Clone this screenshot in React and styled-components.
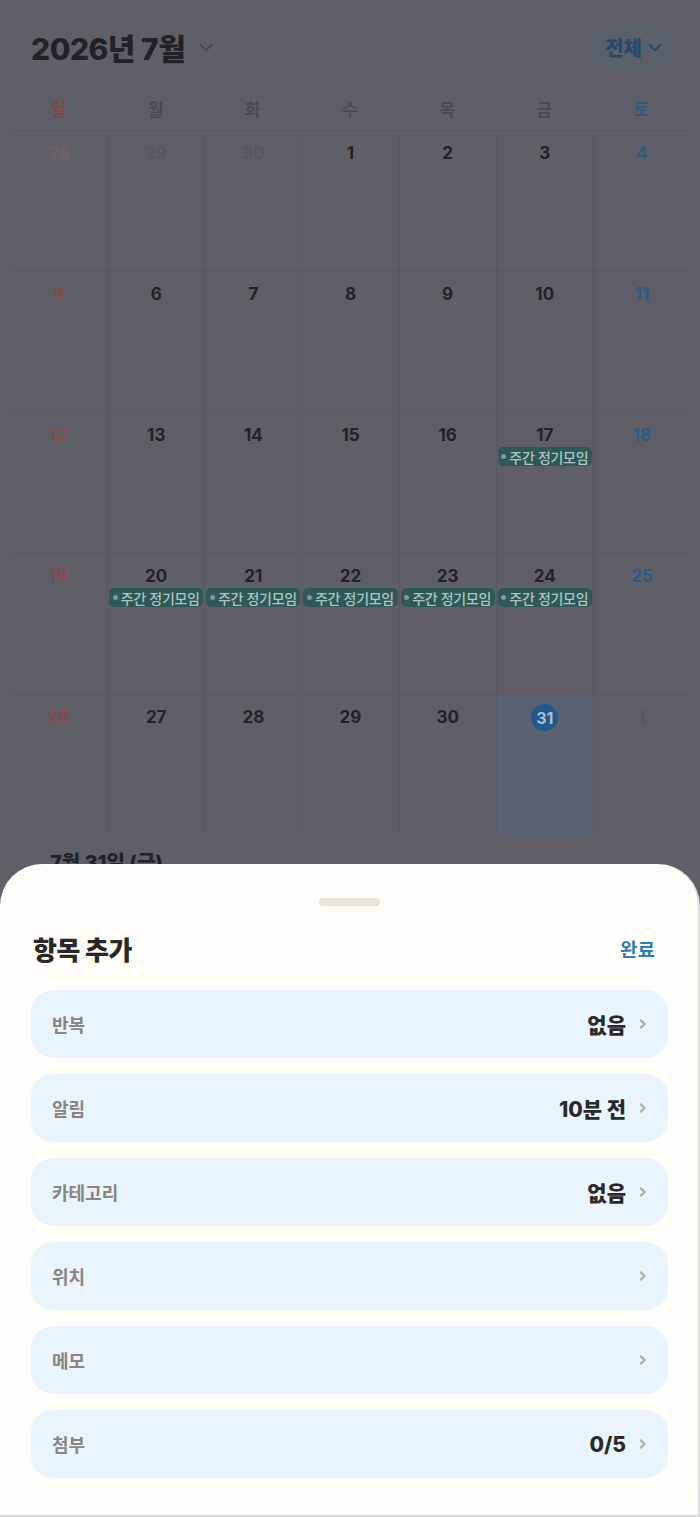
import styled, { createGlobalStyle } from "styled-components";

const GlobalStyle = createGlobalStyle`
  * { box-sizing: border-box; }
  html, body {
    margin: 0;
    padding: 0;
    background: #5f5f68;
    font-family: "Inter", "Noto Sans CJK KR", sans-serif;
  }
`;

const Page = styled.div`
  min-height: 1517px;
  background: #5f5f68;
  padding: 0 10px;
`;

const TopBar = styled.div`
  display: flex;
  justify-content: space-between;
  align-items: center;
  height: 94px;
  padding: 0 12px 0 21px;
`;

const MonthTitle = styled.div`
  display: flex;
  align-items: center;
  gap: 12px;
  font-size: 30px;
  font-weight: 800;
  letter-spacing: -0.5px;
  color: #222229;
`;

const FilterPill = styled.div`
  display: flex;
  align-items: center;
  gap: 4px;
  height: 50px;
  padding: 0 14px 0 20px;
  border-radius: 25px;
  background: #5a616b;
  color: #29496a;
  font-size: 20px;
  font-weight: 800;
`;

const WeekHeader = styled.div`
  display: grid;
  grid-template-columns: repeat(7, 1fr);
  height: 36px;
  padding-bottom: 8px;
  align-items: center;
`;

const WeekDay = styled.div`
  text-align: center;
  font-size: 17px;
  font-weight: 600;
  color: ${({ tone }) =>
    tone === "sun" ? "#7d4a4c" : tone === "sat" ? "#2d5a82" : "#4a4a53"};
`;

const Grid = styled.div`
  display: grid;
  grid-template-columns: repeat(7, 1fr);
  grid-auto-rows: 141px;
`;

const Cell = styled.div`
  border-top: 1px solid #595961;
  border-left: ${({ first }) => (first ? "none" : "1px solid #595961")};
  background: ${({ today }) => (today ? "#5a6271" : "transparent")};
  display: flex;
  flex-direction: column;
  align-items: center;
  padding-top: 9px;
`;

const dateColor = ({ tone, muted }) => {
  if (muted && tone === "sun") return "#725f64";
  if (muted) return "#58595f";
  if (tone === "sun") return "#8a4b4b";
  if (tone === "sat") return "#2c5a84";
  return "#222229";
};

const DateNum = styled.div`
  height: 25px;
  min-width: 26px;
  display: flex;
  align-items: center;
  justify-content: center;
  font-size: 17px;
  font-weight: 700;
  color: ${dateColor};
`;

const TodayDot = styled.div`
  width: 27px;
  height: 27px;
  border-radius: 50%;
  background: #1f5a8c;
  color: #a9bccd;
  display: flex;
  align-items: center;
  justify-content: center;
  font-size: 16px;
  font-weight: 700;
`;

const Chip = styled.div`
  align-self: stretch;
  margin: 0 1px;
  height: 19px;
  border-radius: 5px;
  background: #2e5956;
  color: #aec3c1;
  font-size: 14px;
  font-weight: 500;
  letter-spacing: -0.3px;
  display: flex;
  align-items: center;
  justify-content: center;
  gap: 3px;
  white-space: nowrap;
  overflow: hidden;

  &::before {
    content: "";
    width: 5px;
    height: 5px;
    border-radius: 50%;
    background: #7f9b99;
    flex: none;
  }
`;

const DayTitle = styled.div`
  padding: 12px 0 0 40px;
  font-size: 20px;
  font-weight: 800;
  color: #222229;
`;

const Sheet = styled.div`
  position: fixed;
  left: 0;
  right: 0;
  bottom: 0;
  background: #fffdf8;
  border-radius: 42px 42px 0 0;
  border-right: 2px solid #dcdcdc;
  border-bottom: 2px solid #dcdcdc;
  padding: 34px 30px 37px 31px;
`;

const Handle = styled.div`
  width: 61px;
  height: 8px;
  border-radius: 4px;
  background: #ebe3d6;
  margin: 0 auto 24px;
`;

const SheetHeader = styled.div`
  display: flex;
  justify-content: space-between;
  align-items: center;
  height: 36px;
  padding: 0 13px 0 2px;
  margin-bottom: 24px;
`;

const SheetTitle = styled.div`
  font-size: 26px;
  font-weight: 800;
  color: #2a2725;
  letter-spacing: -0.5px;
`;

const DoneButton = styled.div`
  font-size: 19px;
  font-weight: 700;
  color: #2b7dbd;
`;

const OptionList = styled.div`
  display: flex;
  flex-direction: column;
  gap: 16px;
`;

const Option = styled.div`
  height: 68px;
  border-radius: 22px;
  background: #e9f4fd;
  display: flex;
  align-items: center;
  justify-content: space-between;
  padding: 0 21px 0 21px;
`;

const OptionLabel = styled.div`
  font-size: 18px;
  font-weight: 600;
  color: #8a8580;
`;

const OptionValue = styled.div`
  display: flex;
  align-items: center;
  gap: 13px;
  font-size: 21px;
  font-weight: 800;
  color: #2a2a2a;
`;

const Chevron = () => (
  <svg width="8" height="12" viewBox="0 0 8 12" fill="none">
    <path d="M2 2.5l3.5 3.5L2 9.5" stroke="#b2aba2" strokeWidth="2.4" strokeLinecap="round" strokeLinejoin="round" />
  </svg>
);

const ChevronDown = ({ size = 16, color }) => (
  <svg width={size} height={size} viewBox="0 0 16 16" fill="none">
    <path d="M3 6l5 5 5-5" stroke={color} strokeWidth="1.8" strokeLinecap="round" strokeLinejoin="round" />
  </svg>
);

const weekDays = ["일", "월", "화", "수", "목", "금", "토"];

const weeks = [
  [28, 29, 30, 1, 2, 3, 4],
  [5, 6, 7, 8, 9, 10, 11],
  [12, 13, 14, 15, 16, 17, 18],
  [19, 20, 21, 22, 23, 24, 25],
  [26, 27, 28, 29, 30, 31, 1],
];

const events = [17, 20, 21, 22, 23, 24];

const options = [
  { label: "반복", value: "없음" },
  { label: "알림", value: "10분 전" },
  { label: "카테고리", value: "없음" },
  { label: "위치", value: "" },
  { label: "메모", value: "" },
  { label: "첨부", value: "0/5" },
];

export default function App() {
  return (
    <>
      <GlobalStyle />
      <Page>
        <TopBar>
          <MonthTitle>
            2026년 7월
            <ChevronDown size={18} color="#4c4c56" />
          </MonthTitle>
          <FilterPill>
            전체
            <ChevronDown size={18} color="#29496a" />
          </FilterPill>
        </TopBar>
        <WeekHeader>
          {weekDays.map((d, i) => (
            <WeekDay key={d} tone={i === 0 ? "sun" : i === 6 ? "sat" : ""}>
              {d}
            </WeekDay>
          ))}
        </WeekHeader>
        <Grid>
          {weeks.map((week, w) =>
            week.map((day, i) => {
              const muted = (w === 0 && day > 20) || (w === 4 && day < 10);
              const tone = i === 0 ? "sun" : i === 6 ? "sat" : "";
              const today = w === 4 && day === 31;
              const hasEvent = !muted && events.includes(day);
              return (
                <Cell key={`${w}-${i}`} first={i === 0} today={today}>
                  {today ? (
                    <TodayDot>{day}</TodayDot>
                  ) : (
                    <DateNum tone={tone} muted={muted}>
                      {day}
                    </DateNum>
                  )}
                  {hasEvent && <Chip>주간 정기모임</Chip>}
                </Cell>
              );
            })
          )}
        </Grid>
        <DayTitle>7월 31일 (금)</DayTitle>
      </Page>

      <Sheet>
        <Handle />
        <SheetHeader>
          <SheetTitle>항목 추가</SheetTitle>
          <DoneButton>완료</DoneButton>
        </SheetHeader>
        <OptionList>
          {options.map((o) => (
            <Option key={o.label}>
              <OptionLabel>{o.label}</OptionLabel>
              <OptionValue>
                {o.value}
                <Chevron />
              </OptionValue>
            </Option>
          ))}
        </OptionList>
      </Sheet>
    </>
  );
}
